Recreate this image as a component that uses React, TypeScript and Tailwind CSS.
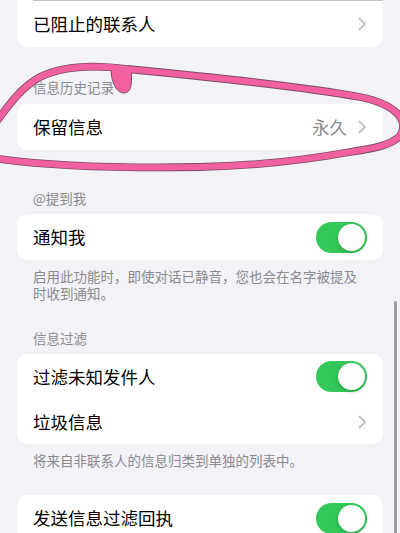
import React from "react";

const font = { fontFamily: '"Noto Sans CJK SC", "Noto Sans", sans-serif' };

function Chevron() {
	return (
		<svg width="9" height="14" viewBox="0 0 9 14" fill="none">
			<path
				d="M1.5 1.5L7 7l-5.5 5.5"
				stroke="#c4c4c7"
				strokeWidth="2"
				strokeLinecap="round"
				strokeLinejoin="round"
			/>
		</svg>
	);
}

function Toggle() {
	return (
		<div className="flex h-[31px] w-[51px] items-center justify-end rounded-full bg-[#34c759] p-[2px]">
			<div className="size-[27px] rounded-full bg-white shadow-[0_2px_4px_rgba(0,0,0,0.18)]" />
		</div>
	);
}

function Header({ children, className }: { children: React.ReactNode; className: string }) {
	return (
		<div className={`pl-[33px] text-[13.5px] leading-[18px] text-[#8a8a8e] ${className}`}>
			{children}
		</div>
	);
}

function Row({
	label,
	right,
	height = "h-[46px]",
}: {
	label: string;
	right: React.ReactNode;
	height?: string;
}) {
	return (
		<div className={`flex items-center justify-between pl-4 pr-4 ${height}`}>
			<span className="text-[17.5px] leading-[22px] text-black">{label}</span>
			{right}
		</div>
	);
}

function Ellipse() {
	// hand-drawn marker loop round the message history row
	const d =
		"M -8 128 C 8 106, 20 88, 40 77 C 60 67, 90 64, 127 69 C 200 76, 300 86, 360 97 C 395 104, 410 120, 400 136 C 390 146, 370 149, 350 152 C 300 161, 250 166, 200 167 C 140 168, 60 167, 0 159 C -10 157, -20 150, -20 140";
	const blob = "M 111 68 C 111 85, 118 93.5, 124.5 93 C 131 92.5, 132.5 84, 131 69 Z";
	return (
		<svg
			className="pointer-events-none absolute left-0 top-0"
			width="400"
			height="533"
			viewBox="0 0 400 533"
			fill="none"
		>
			<path d={d} stroke="#7d4a62" strokeWidth="7.8" strokeLinecap="round" />
			<path d={blob} fill="#f2619f" stroke="#7d4a62" strokeWidth="1" />
			<path d={d} stroke="#f2619f" strokeWidth="6.2" strokeLinecap="round" />
			<path d="M 112 70 C 112 85, 118.5 92.5, 124.5 92 C 130.5 91.5, 131.5 84, 130 70 Z" fill="#f2619f" />
		</svg>
	);
}

export default function App() {
	return (
		<div className="relative h-[533px] w-[400px] overflow-hidden bg-[#f2f2f7]" style={font}>
			<div className="flex flex-col">
				{/* blocked contacts */}
				<div className="mx-[17px] rounded-b-[10px] bg-white">
					<div className="ml-4 flex h-[47px] items-center justify-between border-t-[0.5px] border-[#c6c6c8] pr-4">
						<span className="text-[17.5px] leading-[22px] text-black">已阻止的联系人</span>
						<Chevron />
					</div>
				</div>

				<Header className="mb-[8px] mt-[30.5px]">信息历史记录</Header>
				<div className="mx-[17px] rounded-[10px] bg-white">
					<Row
						label="保留信息"
						right={
							<div className="flex items-center gap-[11px]">
								<span className="text-[17.5px] leading-[22px] text-[#8a8a8e]">永久</span>
								<Chevron />
							</div>
						}
					/>
				</div>

				<Header className="mb-[7px] mt-[39.5px]">@提到我</Header>
				<div className="mx-[17px] rounded-[10px] bg-white">
					<Row label="通知我" right={<Toggle />} />
				</div>
				<div className="px-[33px] pt-2 text-[13.5px] leading-[17px] text-[#8a8a8e]">
					<div>启用此功能时，即使对话已静音，您也会在名字被提及</div>
					<div>时收到通知。</div>
				</div>

				<Header className="mb-[7px] mt-[27px]">信息过滤</Header>
				<div className="mx-[17px] rounded-[10px] bg-white">
					<Row label="过滤未知发件人" right={<Toggle />} height="h-[45px]" />
					<Row label="垃圾信息" right={<Chevron />} height="h-[45px]" />
				</div>
				<div className="px-[33px] pt-2 text-[13.5px] leading-[17px] text-[#8a8a8e]">
					将来自非联系人的信息归类到单独的列表中。
				</div>

				<div className="mx-[17px] mt-[26px] rounded-[10px] bg-white">
					<Row label="发送信息过滤回执" right={<Toggle />} />
				</div>
			</div>

			<Ellipse />
			<div className="absolute right-[3.5px] top-[301px] h-[240px] w-[2.5px] rounded-full bg-[#9b9ba0]" />
		</div>
	);
}
